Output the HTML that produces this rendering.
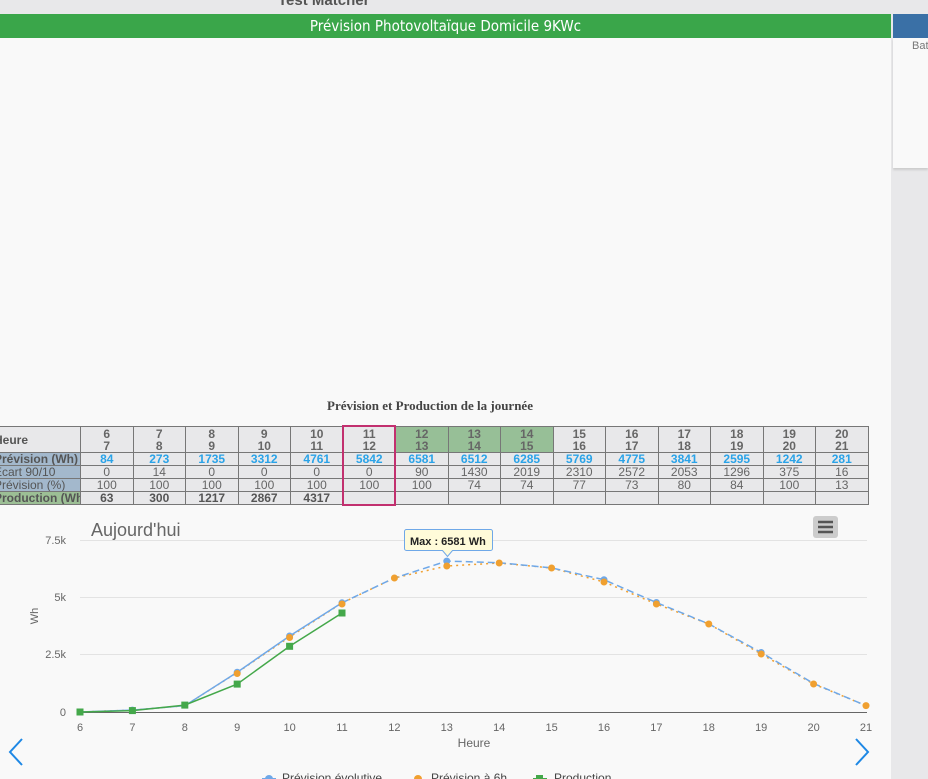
<!DOCTYPE html>
<html><head><meta charset="utf-8"><style>
*{margin:0;padding:0;box-sizing:border-box}
body{width:928px;height:779px;overflow:hidden;background:#e8e8ea;font-family:"Liberation Sans",sans-serif;position:relative}
.top{position:absolute;left:0;top:0;width:928px;height:14px;background:#e8e8ea;overflow:hidden}
.top span{position:absolute;left:278px;top:-8px;font-size:15px;font-weight:bold;color:#555}
.green{position:absolute;left:0;top:14px;width:891px;height:24px;background:#3aa64a;color:#fff;text-align:center;font-size:15px;line-height:24px;font-family:"DejaVu Sans Condensed","Liberation Sans Narrow","Liberation Sans",sans-serif}
.panel{position:absolute;left:0;top:38px;width:891px;height:741px;background:#f9f9f9}
.blue{position:absolute;left:893px;top:14px;width:35px;height:24px;background:#3a70a6}
.rp{position:absolute;left:893px;top:38px;width:35px;height:130px;background:#f9f9f9;box-shadow:0 2px 2px #ccc;overflow:hidden}
.rp span{position:absolute;left:19px;top:2px;font-size:11px;color:#777}
.ttl{position:absolute;left:0;top:398px;width:860px;text-align:center;font-family:"Liberation Serif",serif;font-weight:bold;font-size:13px;color:#444}
table{position:absolute;left:-7px;top:426px;border-collapse:collapse;table-layout:fixed;width:875px;font-size:12px;color:#666;background:#e8e8ea}
td{border:1px solid #777;text-align:center;height:13px;line-height:11px;padding:0;width:52.5px;overflow:hidden}
td.l{width:87px;text-align:left;white-space:nowrap;font-weight:bold;color:#555}
tr.h td{height:26px;font-weight:bold;line-height:12px}
tr.p td{color:#2aa3e8;font-weight:bold}
tr.p td.l,tr.e td.l,tr.c td.l{background:#a3b8cc;color:#555}
tr.pr td{font-weight:bold;color:#555}
tr.pr td.l{background:#9cbf95}
td.g{background:#97bf97}
.sel{position:absolute;left:342px;top:425px;width:54px;height:81px;border:2px solid #c2306f}
</style></head><body>
<div class="top"><span>Test Matcher</span></div>
<div class="green">Prévision Photovoltaïque Domicile 9KWc</div>
<div class="blue"></div>
<div class="rp"><span>Bat</span></div>
<div class="panel"></div>
<div class="ttl">Prévision et Production de la journée</div>
<table>
<tr class="h"><td class="l">Heure</td><td>6<br>7</td><td>7<br>8</td><td>8<br>9</td><td>9<br>10</td><td>10<br>11</td><td>11<br>12</td><td class="g">12<br>13</td><td class="g">13<br>14</td><td class="g">14<br>15</td><td>15<br>16</td><td>16<br>17</td><td>17<br>18</td><td>18<br>19</td><td>19<br>20</td><td>20<br>21</td></tr>
<tr class="p"><td class="l">Prévision (Wh)</td><td>84</td><td>273</td><td>1735</td><td>3312</td><td>4761</td><td>5842</td><td>6581</td><td>6512</td><td>6285</td><td>5769</td><td>4775</td><td>3841</td><td>2595</td><td>1242</td><td>281</td></tr>
<tr class="e"><td class="l" style="font-weight:normal">Écart 90/10</td><td>0</td><td>14</td><td>0</td><td>0</td><td>0</td><td>0</td><td>90</td><td>1430</td><td>2019</td><td>2310</td><td>2572</td><td>2053</td><td>1296</td><td>375</td><td>16</td></tr>
<tr class="c"><td class="l" style="font-weight:normal">Prévision (%)</td><td>100</td><td>100</td><td>100</td><td>100</td><td>100</td><td>100</td><td>100</td><td>74</td><td>74</td><td>77</td><td>73</td><td>80</td><td>84</td><td>100</td><td>13</td></tr>
<tr class="pr"><td class="l">Production (Wh)</td><td>63</td><td>300</td><td>1217</td><td>2867</td><td>4317</td><td></td><td></td><td></td><td></td><td></td><td></td><td></td><td></td><td></td><td></td></tr>
</table>
<div class="sel"></div>
<svg style="position:absolute;left:0;top:0" width="928" height="779" font-family="Liberation Sans, sans-serif">
<text x="91" y="536" font-size="18" fill="#666">Aujourd'hui</text>
<rect x="813" y="516" width="25" height="22" rx="3" fill="#ccc"/>
<g stroke="#555" stroke-width="2.5"><line x1="818" y1="522" x2="833" y2="522"/><line x1="818" y1="527" x2="833" y2="527"/><line x1="818" y1="532" x2="833" y2="532"/></g>
<g stroke="#e3e3e3" stroke-width="1"><line x1="80" y1="540.5" x2="867" y2="540.5"/><line x1="80" y1="597.5" x2="867" y2="597.5"/><line x1="80" y1="654.5" x2="867" y2="654.5"/></g>
<line x1="80" y1="712.5" x2="867" y2="712.5" stroke="#666" stroke-width="1"/>
<g font-size="11" fill="#666" text-anchor="end"><text x="66" y="544">7.5k</text><text x="66" y="601">5k</text><text x="66" y="658">2.5k</text><text x="66" y="716">0</text></g>
<text x="38" y="616" font-size="11" fill="#666" transform="rotate(-90 38 616)" text-anchor="middle">Wh</text>
<g font-size="11" fill="#666" text-anchor="middle">
<text x="80" y="731">6</text><text x="132.4" y="731">7</text><text x="184.8" y="731">8</text><text x="237.2" y="731">9</text><text x="289.6" y="731">10</text><text x="342" y="731">11</text><text x="394.4" y="731">12</text><text x="446.8" y="731">13</text><text x="499.2" y="731">14</text><text x="551.6" y="731">15</text><text x="604" y="731">16</text><text x="656.4" y="731">17</text><text x="708.8" y="731">18</text><text x="761.2" y="731">19</text><text x="813.6" y="731">20</text><text x="866" y="731">21</text>
<text x="474" y="747" font-size="12">Heure</text></g>
<polyline fill="none" stroke="#f0a030" stroke-width="1.5" stroke-dasharray="2,4" points="80,712 132.4,710.1 184.8,705.7 237.2,672.5 289.6,637 342,603 394.4,578 446.8,566 499.2,563 551.6,568 604,582 656.4,604 708.8,624 761.2,654 813.6,684 866,705.6"/>
<polyline fill="none" stroke="#6fa8e8" stroke-width="1.5" points="80,712 132.4,710.1 184.8,705.7 237.2,672.2 289.6,636 342,602.8"/>
<polyline fill="none" stroke="#6fa8e8" stroke-width="1.5" stroke-dasharray="7,4" points="342,602.8 394.4,578 446.8,561.1 499.2,562.7 551.6,567.9 604,579.7 656.4,602.5 708.8,623.9 761.2,652.5 813.6,683.5 866,705.6"/>
<polyline fill="none" stroke="#44a84a" stroke-width="1.5" points="80,712 132.4,710.6 184.8,705.1 237.2,684.1 289.6,646.3 342,613"/>
<g fill="#6fa8e8"><circle cx="237.2" cy="672.2" r="3.5"/><circle cx="289.6" cy="636" r="3.5"/><circle cx="342" cy="602.8" r="3.5"/><circle cx="446.8" cy="561.1" r="3.5"/><circle cx="604" cy="579.7" r="3.5"/><circle cx="656.4" cy="602.5" r="3.5"/><circle cx="761.2" cy="652.5" r="3.5"/><circle cx="132.4" cy="710.1" r="3.5"/></g>
<g fill="#f0a030"><circle cx="237.2" cy="673.5" r="3.5"/><circle cx="289.6" cy="637.5" r="3.5"/><circle cx="342" cy="604" r="3.5"/><circle cx="394.4" cy="578" r="3.5"/><circle cx="446.8" cy="566" r="3.5"/><circle cx="499.2" cy="563" r="3.5"/><circle cx="551.6" cy="568" r="3.5"/><circle cx="604" cy="582" r="3.5"/><circle cx="656.4" cy="604" r="3.5"/><circle cx="708.8" cy="624" r="3.5"/><circle cx="761.2" cy="654" r="3.5"/><circle cx="813.6" cy="684" r="3.5"/><circle cx="866" cy="705.6" r="3.5"/></g>
<g fill="#44a84a"><rect x="76.5" y="708.5" width="7" height="7"/><rect x="128.9" y="707.1" width="7" height="7"/><rect x="181.3" y="701.6" width="7" height="7"/><rect x="233.7" y="680.6" width="7" height="7"/><rect x="286.1" y="642.8" width="7" height="7"/><rect x="338.5" y="609.5" width="7" height="7"/></g>
<path d="M406.5,529.5 h84 a2,2 0 0 1 2,2 v17 a2,2 0 0 1 -2,2 h-38 l-5,6 l-5,-6 h-36 a2,2 0 0 1 -2,-2 v-17 a2,2 0 0 1 2,-2z" fill="#fffbd9" stroke="#6fa8e8"/>
<text x="410" y="545" font-size="11" font-weight="bold" fill="#222">Max : 6581 Wh</text>
<path d="M22,739 L10,752 L22,765" fill="none" stroke="#1e88e5" stroke-width="2"/>
<path d="M856,739 L868,752 L856,765" fill="none" stroke="#1e88e5" stroke-width="2"/>
<g font-size="12" fill="#444"><line x1="262" y1="779" x2="276" y2="779" stroke="#6fa8e8" stroke-width="2"/><circle cx="269" cy="779" r="4" fill="#6fa8e8"/><text x="282" y="782">Prévision évolutive</text>
<circle cx="418" cy="779" r="4" fill="#f0a030"/><text x="431" y="782">Prévision à 6h</text>
<line x1="533" y1="779" x2="547" y2="779" stroke="#44a84a" stroke-width="2"/><rect x="536" y="775" width="7" height="7" fill="#44a84a"/><text x="554" y="782">Production</text></g>
</svg>
</body></html>
